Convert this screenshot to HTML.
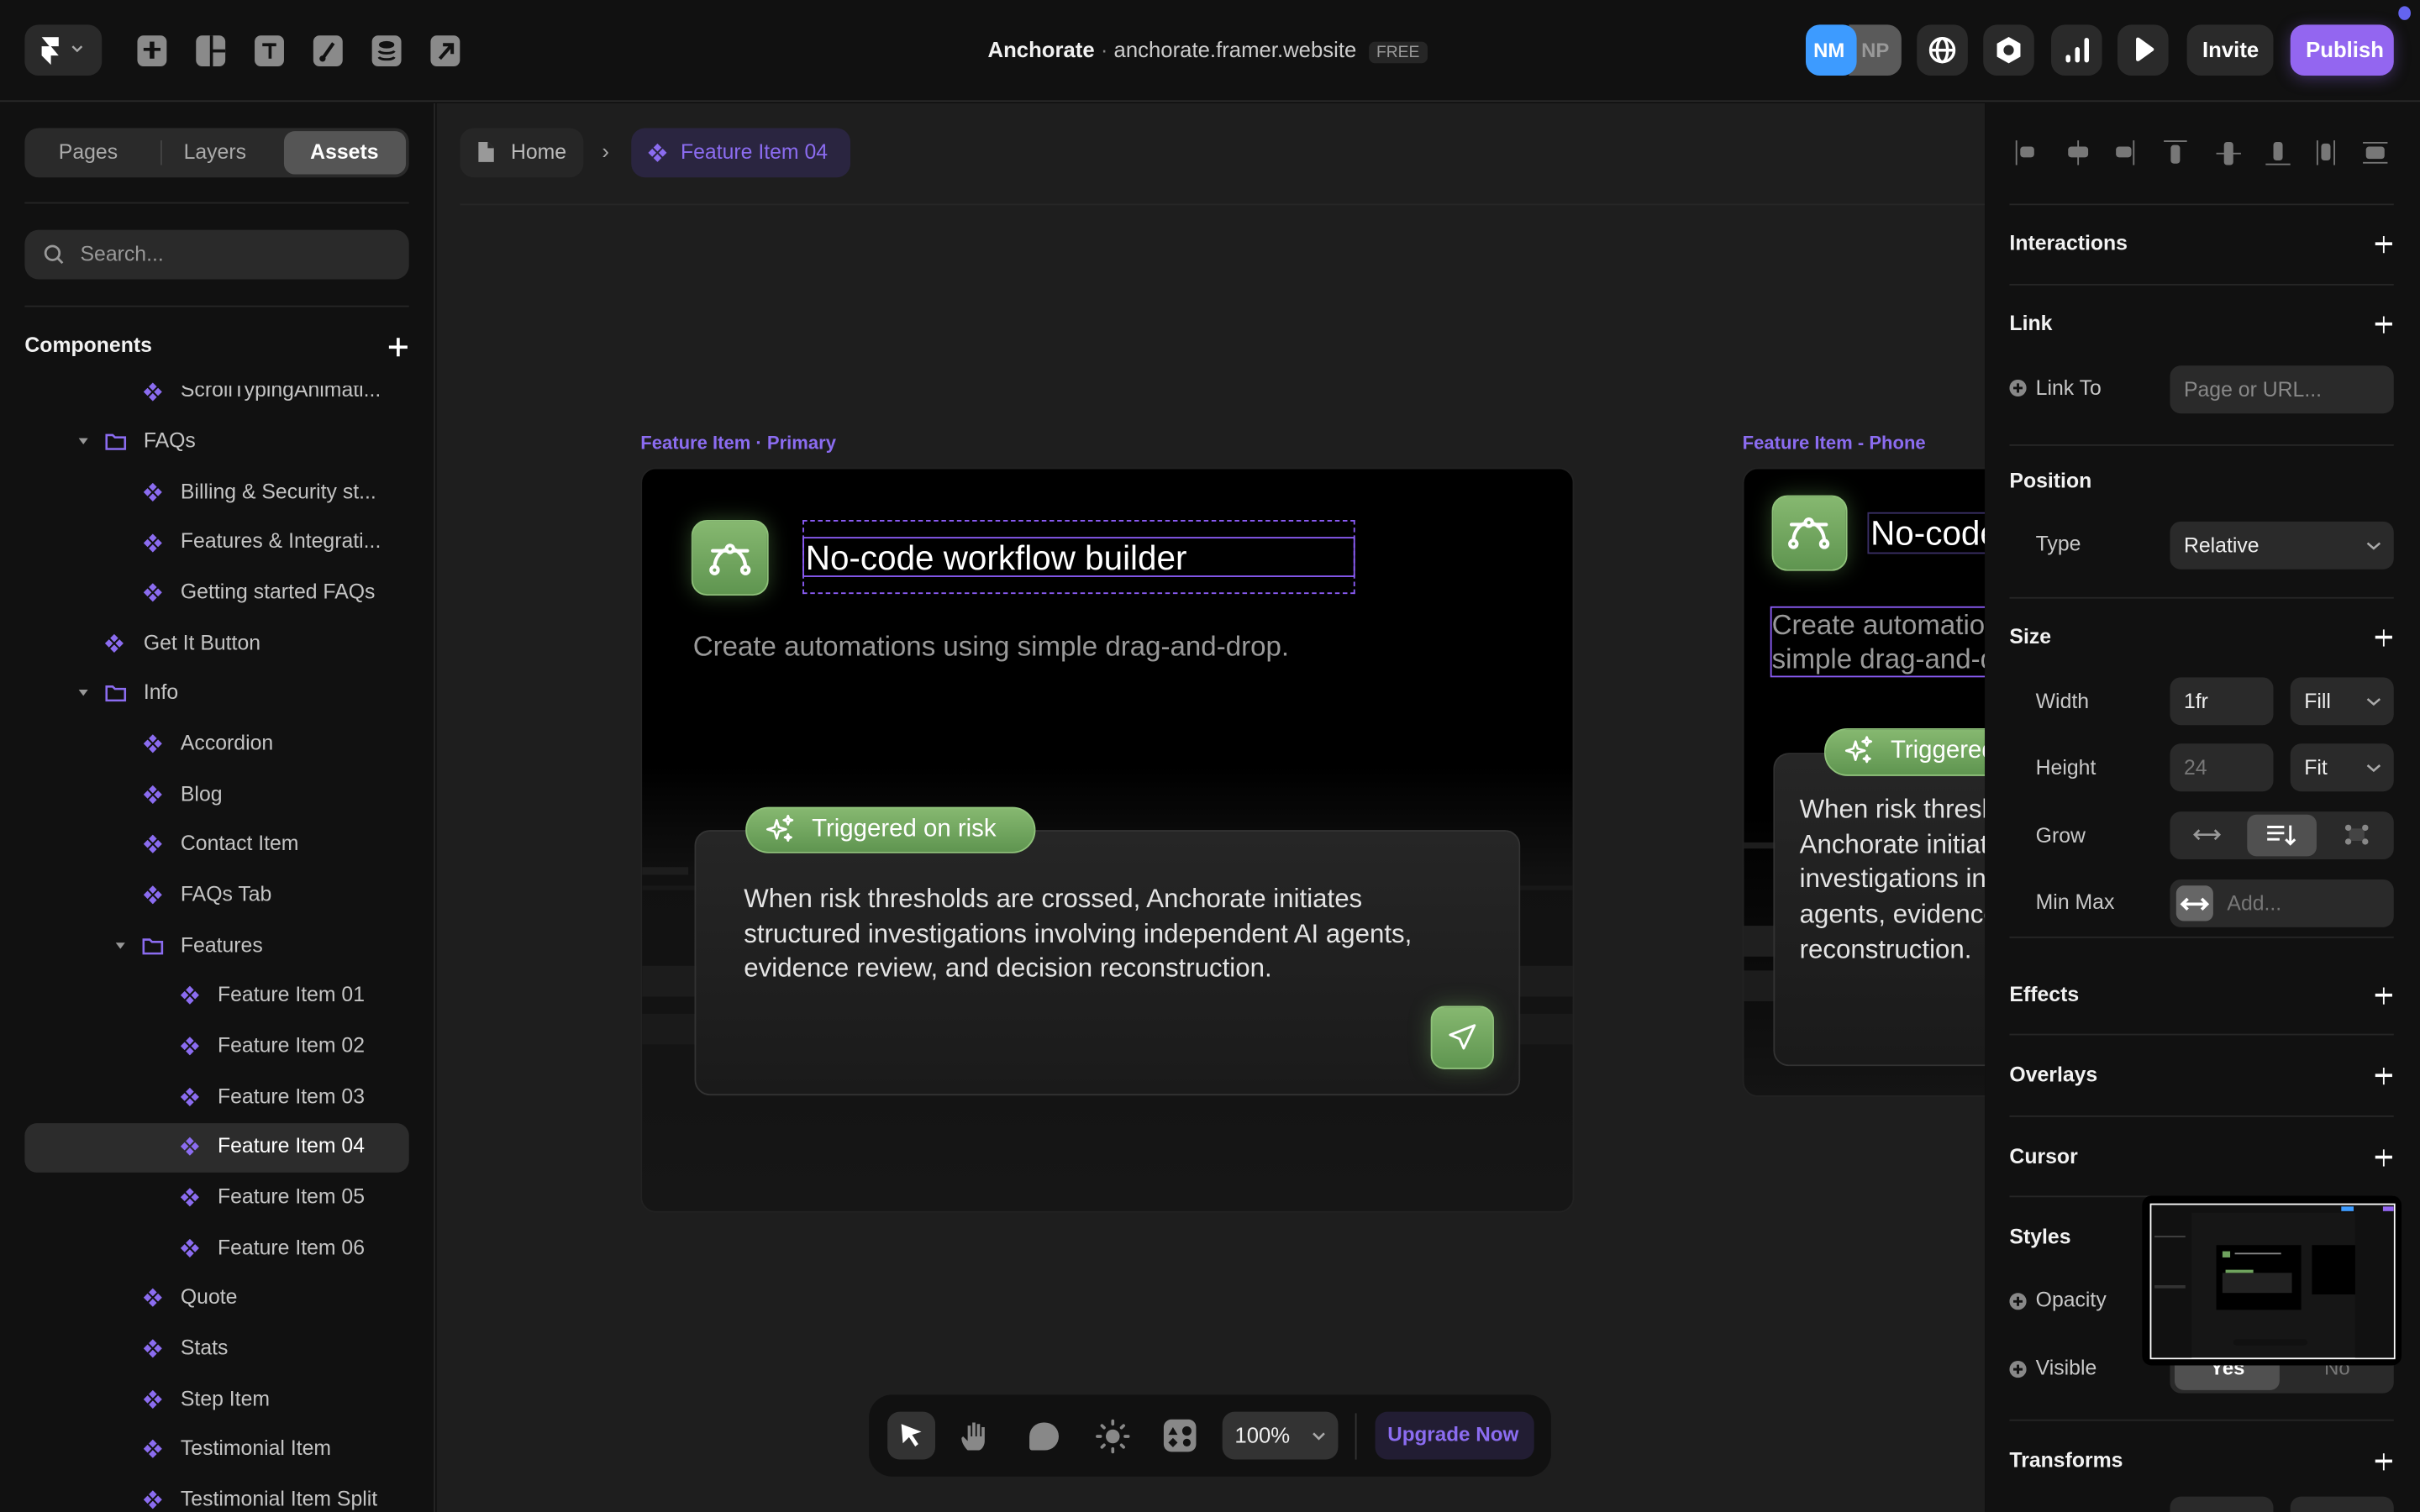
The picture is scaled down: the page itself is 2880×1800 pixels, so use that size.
<!DOCTYPE html>
<html><head><meta charset="utf-8">
<style>
*{margin:0;padding:0;box-sizing:border-box}
html,body{width:2880px;height:1800px;overflow:hidden;background:#111}
#w{position:absolute;left:0;top:0;width:1568px;height:980px;transform:scale(1.836735);transform-origin:0 0;font-family:"Liberation Sans",sans-serif;color:#ddd;background:#111;overflow:hidden}
.a{position:absolute}
.t{position:absolute;font-size:13px;line-height:18px;white-space:nowrap}
.tb{position:absolute;background:#2a2a2a;border-radius:8px}
.ic{position:absolute;width:20px;height:20px;background:#8a8a8a;border-radius:4px}
.li{position:absolute;font-size:13.5px;line-height:18px;color:#c4c4c4;white-space:nowrap}
.ci{position:absolute;width:12px;height:12px}
.hd{position:absolute;font-size:13.5px;font-weight:bold;color:#f2f2f2;line-height:18px}
.pl{position:absolute;font-size:18px;color:#fff;line-height:18px;font-weight:300;white-space:nowrap}
.dv{position:absolute;height:1px;background:#262626}
.lb{position:absolute;font-size:13.5px;color:#c8c8c8;line-height:18px}
.in{position:absolute;background:#2a2a2a;border-radius:7px;height:31px;font-size:13.5px;line-height:31px;padding-left:9px;color:#eee}
.gr{background:linear-gradient(#86b870,#5f9550);border:1px solid #8fc27a;box-shadow:0 0 14px rgba(120,190,100,.35)}
</style></head><body><div id="w">
<svg width="0" height="0" style="position:absolute"><defs>
<symbol id="cmp" viewBox="0 0 12 12"><path fill="#8b6cf0" d="M6 0l2.6 2.6L6 5.2 3.4 2.6zM6 6.8l2.6 2.6L6 12 3.4 9.4zM0 6l2.6-2.6L5.2 6 2.6 8.6zM6.8 6l2.6-2.6L12 6 9.4 8.6z"/></symbol>
<symbol id="fld" viewBox="0 0 14 12"><path fill="none" stroke="#8b6cf0" stroke-width="1.4" d="M1 2h4l1.5 1.5H13V11H1z"/></symbol>
<symbol id="bez" viewBox="0 0 24 24"><g fill="none" stroke="#fff" stroke-width="1.8" stroke-linecap="round"><path d="M4 17c0-6 4-10 8-10s8 4 8 10"/><path d="M3 8h18"/><circle cx="12" cy="7" r="1.8" fill="#6fa35e"/><circle cx="4" cy="18" r="1.8" fill="#6fa35e"/><circle cx="20" cy="18" r="1.8" fill="#6fa35e"/></g></symbol>
<symbol id="spk" viewBox="0 0 24 24"><g fill="none" stroke="#fff" stroke-width="1.6" stroke-linejoin="round"><path d="M9 5l1.5 5 5 1.5-5 1.5L9 18l-1.5-5-5-1.5 5-1.5z"/><path d="M17 2l.8 2.2L20 5l-2.2.8L17 8l-.8-2.2L14 5l2.2-.8z"/><path d="M17 15l.6 1.6 1.6.6-1.6.6L17 19.4l-.6-1.6-1.6-.6 1.6-.6z"/></g></symbol>
</defs></svg>

<!-- top bar -->
<div class="a" style="left:0;top:0;width:1568px;height:66px;background:#111;border-bottom:1px solid #2a2a2a"></div>
<div class="tb" style="left:16px;top:16px;width:50px;height:33px;border-radius:9px"></div>
<svg class="a" style="left:26px;top:24px" width="14" height="18" viewBox="0 0 14 18"><path fill="#fff" d="M1 0h11v6H6zM1 6h6l5 6H7v6l-6-6z"/></svg>
<svg class="a" style="left:46px;top:29px" width="8" height="6" viewBox="0 0 8 6"><path d="M1 1l3 3 3-3" stroke="#aaa" stroke-width="1.3" fill="none"/></svg>
<div class="ic" style="left:89px;top:23px;width:19px"></div><div class="a" style="left:93px;top:31px;width:11px;height:2.4px;background:#111"></div><div class="a" style="left:97.3px;top:27px;width:2.4px;height:11px;background:#111"></div>
<div class="ic" style="left:127px;top:23px;width:19px"></div><div class="a" style="left:135.5px;top:23px;width:2px;height:20px;background:#111"></div><div class="a" style="left:137px;top:32px;width:9px;height:2px;background:#111"></div>
<div class="ic" style="left:165px;top:23px;width:19px"></div><div class="a" style="left:170px;top:28px;width:9px;height:2.2px;background:#111"></div><div class="a" style="left:173.5px;top:28px;width:2.2px;height:10px;background:#111"></div>
<div class="ic" style="left:203px;top:23px;width:19px"></div><svg class="a" style="left:203px;top:23px" width="19" height="20"><path d="M6 15L13 5" stroke="#111" stroke-width="2.2"/><circle cx="6" cy="15" r="2" fill="#111"/></svg>
<div class="ic" style="left:241px;top:23px;width:19px"></div><svg class="a" style="left:241px;top:23px" width="19" height="20"><ellipse cx="9.5" cy="6" rx="5" ry="2.4" fill="#111"/><path d="M4.5 10c1 2 9 2 10 0M4.5 14c1 2 9 2 10 0" stroke="#111" stroke-width="1.6" fill="none"/></svg>
<div class="ic" style="left:279px;top:23px;width:19px"></div><svg class="a" style="left:279px;top:23px" width="19" height="20"><path d="M6 15L13 7M8 6h6v6" stroke="#111" stroke-width="2.2" fill="none"/></svg>

<div class="t" style="left:640px;top:23px;font-size:14px;color:#f2f2f2"><b>Anchorate</b> <span style="color:#888">·</span> <span style="color:#ccc">anchorate.framer.website</span> <span style="font-size:10.5px;color:#999;background:#262626;padding:1px 5px;border-radius:4px;margin-left:4px">FREE</span></div>

<div class="a" style="left:1198px;top:16px;width:34px;height:33px;background:#5a5a5a;border-radius:0 9px 9px 0"></div>
<div class="t" style="left:1206px;top:24px;font-size:13px;color:#999;font-weight:bold">NP</div>
<div class="a" style="left:1170px;top:16px;width:33px;height:33px;background:#3d9bff;border-radius:9px"></div>
<div class="t" style="left:1175px;top:24px;font-size:13px;color:#fff;font-weight:bold">NM</div>
<div class="tb" style="left:1242px;top:16px;width:33px;height:33px;border-radius:9px"></div>
<svg class="a" style="left:1249px;top:23px" width="19" height="19" viewBox="0 0 20 20"><g fill="none" stroke="#fff" stroke-width="2"><circle cx="10" cy="10" r="8"/><ellipse cx="10" cy="10" rx="3.5" ry="8"/><path d="M2 10h16"/></g></svg>
<div class="tb" style="left:1285px;top:16px;width:33px;height:33px;border-radius:9px"></div>
<svg class="a" style="left:1292px;top:23px" width="19" height="19" viewBox="0 0 20 20"><path fill="#fff" fill-rule="evenodd" d="M10 1l8 4.5v9L10 19l-8-4.5v-9zM10 6.5a3.5 3.5 0 100 7 3.5 3.5 0 000-7z"/></svg>
<div class="tb" style="left:1329px;top:16px;width:33px;height:33px;border-radius:9px"></div>
<svg class="a" style="left:1336px;top:23px" width="19" height="19"><g stroke="#fff" stroke-width="3" stroke-linecap="round"><path d="M4 16v-2M10 16V9M16 16V3"/></g></svg>
<div class="tb" style="left:1372px;top:16px;width:33px;height:33px;border-radius:9px"></div>
<svg class="a" style="left:1382px;top:24px" width="14" height="17"><path fill="#fff" d="M2 1.5c0-1 1-1.5 2-1l9 6.5c.8.6.8 1.5 0 2l-9 6.5c-1 .5-2 0-2-1z"/></svg>
<div class="tb" style="left:1417px;top:16px;width:56px;height:33px;border-radius:9px"></div>
<div class="t" style="left:1427px;top:23px;font-size:14px;color:#fff;font-weight:bold">Invite</div>
<div class="a" style="left:1484px;top:16px;width:67px;height:33px;background:#9366f0;border-radius:9px;box-shadow:0 2px 10px rgba(147,102,240,.35)"></div>
<div class="t" style="left:1494px;top:23px;font-size:14px;color:#fff;font-weight:bold">Publish</div>
<div class="a" style="left:1554px;top:4px;width:8px;height:9px;background:#6464f0;border-radius:50%"></div>

<!-- left panel -->
<div class="a" style="left:0;top:67px;width:282px;height:913px;background:#111;border-right:1px solid #262626"></div>
<div class="tb" style="left:16px;top:83px;width:249px;height:32px;border-radius:9px"></div>
<div class="a" style="left:184px;top:85px;width:79px;height:28px;background:#555;border-radius:7px"></div>
<div class="a" style="left:104px;top:91px;width:1px;height:16px;background:#444"></div>
<div class="t" style="left:38px;top:90px;font-size:13.5px;color:#aaa">Pages</div>
<div class="t" style="left:119px;top:90px;font-size:13.5px;color:#aaa">Layers</div>
<div class="t" style="left:201px;top:90px;font-size:13.5px;color:#fff;font-weight:bold">Assets</div>
<div class="dv" style="left:16px;top:131px;width:249px"></div>
<div class="tb" style="left:16px;top:149px;width:249px;height:32px;border-radius:9px"></div>
<svg class="a" style="left:28px;top:158px" width="14" height="14"><circle cx="6" cy="6" r="4.5" stroke="#999" stroke-width="1.5" fill="none"/><path d="M9.5 9.5l3 3" stroke="#999" stroke-width="1.5"/></svg>
<div class="t" style="left:52px;top:156px;font-size:13.5px;color:#999">Search...</div>
<div class="dv" style="left:16px;top:198px;width:249px"></div>
<div class="hd" style="left:16px;top:215px">Components</div>
<div class="a" style="left:252px;top:224px;width:12px;height:1.6px;background:#fff"></div><div class="a" style="left:257.2px;top:218.5px;width:1.6px;height:12px;background:#fff"></div>

<div class="a" style="left:16px;top:728px;width:249px;height:32px;background:#2c2c2c;border-radius:8px"></div>

<svg class="ci" style="left:93px;top:248px"><use href="#cmp"/></svg><div class="li" style="left:117px;top:244px;clip-path:inset(6px 0 0 0)">ScrollTypingAnimati...</div>
<div class="a" style="left:51px;top:284px;border:3px solid transparent;border-top:4px solid #999"></div>
<svg class="a" style="left:68px;top:280px" width="14" height="12"><use href="#fld"/></svg><div class="li" style="left:93px;top:277px">FAQs</div>
<svg class="ci" style="left:93px;top:313px"><use href="#cmp"/></svg><div class="li" style="left:117px;top:310px">Billing &amp; Security st...</div>
<svg class="ci" style="left:93px;top:346px"><use href="#cmp"/></svg><div class="li" style="left:117px;top:342px">Features &amp; Integrati...</div>
<svg class="ci" style="left:93px;top:378px"><use href="#cmp"/></svg><div class="li" style="left:117px;top:375px">Getting started FAQs</div>
<svg class="ci" style="left:68px;top:411px"><use href="#cmp"/></svg><div class="li" style="left:93px;top:408px">Get It Button</div>
<div class="a" style="left:51px;top:447px;border:3px solid transparent;border-top:4px solid #999"></div>
<svg class="a" style="left:68px;top:443px" width="14" height="12"><use href="#fld"/></svg><div class="li" style="left:93px;top:440px">Info</div>
<svg class="ci" style="left:93px;top:476px"><use href="#cmp"/></svg><div class="li" style="left:117px;top:473px">Accordion</div>
<svg class="ci" style="left:93px;top:509px"><use href="#cmp"/></svg><div class="li" style="left:117px;top:506px">Blog</div>
<svg class="ci" style="left:93px;top:541px"><use href="#cmp"/></svg><div class="li" style="left:117px;top:538px">Contact Item</div>
<svg class="ci" style="left:93px;top:574px"><use href="#cmp"/></svg><div class="li" style="left:117px;top:571px">FAQs Tab</div>
<div class="a" style="left:75px;top:611px;border:3px solid transparent;border-top:4px solid #999"></div>
<svg class="a" style="left:92px;top:607px" width="14" height="12"><use href="#fld"/></svg><div class="li" style="left:117px;top:604px">Features</div>
<svg class="ci" style="left:117px;top:639px"><use href="#cmp"/></svg><div class="li" style="left:141px;top:636px">Feature Item 01</div>
<svg class="ci" style="left:117px;top:672px"><use href="#cmp"/></svg><div class="li" style="left:141px;top:669px">Feature Item 02</div>
<svg class="ci" style="left:117px;top:705px"><use href="#cmp"/></svg><div class="li" style="left:141px;top:702px">Feature Item 03</div>
<svg class="ci" style="left:117px;top:737px"><use href="#cmp"/></svg><div class="li" style="left:141px;top:734px;color:#fff">Feature Item 04</div>
<svg class="ci" style="left:117px;top:770px"><use href="#cmp"/></svg><div class="li" style="left:141px;top:767px">Feature Item 05</div>
<svg class="ci" style="left:117px;top:803px"><use href="#cmp"/></svg><div class="li" style="left:141px;top:800px">Feature Item 06</div>
<svg class="ci" style="left:93px;top:835px"><use href="#cmp"/></svg><div class="li" style="left:117px;top:832px">Quote</div>
<svg class="ci" style="left:93px;top:868px"><use href="#cmp"/></svg><div class="li" style="left:117px;top:865px">Stats</div>
<svg class="ci" style="left:93px;top:901px"><use href="#cmp"/></svg><div class="li" style="left:117px;top:898px">Step Item</div>
<svg class="ci" style="left:93px;top:933px"><use href="#cmp"/></svg><div class="li" style="left:117px;top:930px">Testimonial Item</div>
<svg class="ci" style="left:93px;top:966px"><use href="#cmp"/></svg><div class="li" style="left:117px;top:963px">Testimonial Item Split</div>

<!-- canvas -->
<div class="a" style="left:283px;top:67px;width:1003px;height:913px;background:#1e1e1e"></div>
<div class="a" style="left:298px;top:83px;width:80px;height:32px;background:#262626;border-radius:9px"></div>
<svg class="a" style="left:309px;top:91px" width="12" height="15"><path fill="#999" d="M1 1h6l4 4v9H1z"/><path fill="#262626" d="M7 1v4h4z"/></svg>
<div class="t" style="left:331px;top:90px;font-size:13.5px;color:#bbb">Home</div>
<div class="t" style="left:390px;top:89px;font-size:14px;color:#aaa">›</div>
<div class="a" style="left:409px;top:83px;width:142px;height:32px;background:#2a2540;border-radius:9px"></div>
<svg class="ci" style="left:420px;top:93px"><use href="#cmp"/></svg>
<div class="t" style="left:441px;top:90px;font-size:13.5px;color:#8b6cf0">Feature Item 04</div>
<div class="dv" style="left:298px;top:132px;width:988px;background:#262626"></div>

<div class="t" style="left:415px;top:278px;font-size:12px;color:#8b6cf0;font-weight:bold">Feature Item · Primary</div>
<div class="a" style="left:415px;top:303px;width:605px;height:483px;border-radius:10px;border:1px solid #222;background:linear-gradient(#000 0%,#000 40%,#111 55%,#161616 100%);overflow:hidden">
  <div class="a" style="left:0;top:258px;width:30px;height:5px;background:#1d1d1d"></div>
  <div class="a" style="left:0;top:270px;width:605px;height:3px;background:#181818"></div>
  <div class="a" style="left:0;top:322px;width:605px;height:20px;background:#1c1c1c"></div>
  <div class="a" style="left:0;top:353px;width:605px;height:20px;background:#1a1a1a"></div>
</div>
<div class="a gr" style="left:448px;top:337px;width:50px;height:49px;border-radius:10px"></div>
<svg class="a" style="left:458px;top:347px" width="30" height="30"><use href="#bez"/></svg>
<div class="a" style="left:520px;top:337px;width:358px;height:48px;border:1px dashed #8b5cf6"></div>
<div class="a" style="left:520px;top:348px;width:358px;height:26px;border:1.3px solid #8b5cf6"></div>
<div class="pl" style="left:522px;top:350px;font-size:22px;line-height:24px">No-code workflow builder</div>
<div class="pl" style="left:449px;top:409px;font-size:18px;line-height:20px;color:#999">Create automations using simple drag-and-drop.</div>
<div class="a" style="left:450px;top:538px;width:535px;height:172px;border-radius:10px;border:1px solid #333;background:linear-gradient(#262626,#1a1a1a)"></div>
<div class="a gr" style="left:483px;top:523px;width:188px;height:30px;border-radius:15px;box-shadow:none"></div>
<svg class="a" style="left:495px;top:527px" width="22" height="22"><use href="#spk"/></svg>
<div class="pl" style="left:526px;top:529px;font-size:16px;font-weight:normal">Triggered on risk</div>
<div class="pl" style="left:482px;top:572px;font-size:17px;line-height:22.5px;color:#e4e4e4;white-space:pre">When risk thresholds are crossed, Anchorate initiates
structured investigations involving independent AI agents,
evidence review, and decision reconstruction.</div>
<div class="a gr" style="left:927px;top:652px;width:41px;height:41px;border-radius:9px"></div>
<svg class="a" style="left:937px;top:662px" width="21" height="21" viewBox="0 0 24 24"><path d="M21 3L3 10l7 3 3 7z" fill="none" stroke="#fff" stroke-width="1.8" stroke-linejoin="round"/></svg>

<!-- phone card -->
<div class="t" style="left:1129px;top:278px;font-size:12px;color:#8b6cf0;font-weight:bold">Feature Item - Phone</div>
<div class="a" style="left:1129px;top:303px;width:200px;height:408px;border-radius:10px;border:1px solid #222;background:linear-gradient(#000 0%,#000 55%,#141414 100%);overflow:hidden">
 <div class="a" style="left:0;top:242px;width:40px;height:4px;background:#1d1d1d"></div>
 <div class="a" style="left:0;top:296px;width:40px;height:20px;background:#1f1f1f"></div>
 <div class="a" style="left:0;top:325px;width:40px;height:20px;background:#1c1c1c"></div>
</div>
<div class="a gr" style="left:1148px;top:321px;width:49px;height:49px;border-radius:10px"></div>
<svg class="a" style="left:1157px;top:330px" width="30" height="30"><use href="#bez"/></svg>
<div class="a" style="left:1210px;top:332px;width:90px;height:27px;border:1.3px solid #3a2f66"></div>
<div class="pl" style="left:1212px;top:334px;font-size:22px;line-height:24px">No-code workflow builder</div>
<div class="a" style="left:1147px;top:393px;width:150px;height:46px;border:1.3px solid #8b5cf6"></div>
<div class="pl" style="left:1148px;top:394px;font-size:18px;line-height:22px;color:#999;white-space:pre">Create automations using
simple drag-and-drop.</div>
<div class="a" style="left:1149px;top:488px;width:200px;height:203px;border-radius:10px;border:1px solid #333;background:linear-gradient(#262626,#1a1a1a)"></div>
<div class="a gr" style="left:1182px;top:472px;width:150px;height:31px;border-radius:15px;box-shadow:none"></div>
<svg class="a" style="left:1194px;top:476px" width="22" height="22"><use href="#spk"/></svg>
<div class="pl" style="left:1225px;top:478px;font-size:16px;font-weight:normal">Triggered on risk</div>
<div class="pl" style="left:1166px;top:514px;font-size:17px;line-height:22.7px;color:#e4e4e4;white-space:pre">When risk thresholds are
Anchorate initiates
investigations involving
agents, evidence
reconstruction.</div>

<!-- bottom toolbar -->
<div class="a" style="left:563px;top:904px;width:442px;height:53px;background:#111;border-radius:15px"></div>
<div class="a" style="left:575px;top:915px;width:31px;height:31px;background:#333;border-radius:8px"></div>
<svg class="a" style="left:581px;top:921px" width="20" height="20"><path d="M3 2l13 5-6 2 4 6-2 1.5-4-6-4 4z" fill="#fff"/></svg>
<svg class="a" style="left:622px;top:920px" width="20" height="22"><path fill="#888" d="M5 20c-2-2-4-5-4-8l1-1 3 3V4h2v7h1V2h2v9h1V3h2v8h1V5h2v9c0 3-2 6-4 6z"/></svg>
<div class="a" style="left:667px;top:922px;width:19px;height:18px;background:#888;border-radius:10px 10px 10px 2px"></div>
<svg class="a" style="left:709px;top:919px" width="24" height="24"><circle cx="12" cy="12" r="4.5" fill="#888"/><g stroke="#888" stroke-width="2" stroke-linecap="round"><path d="M12 2v2M12 20v2M2 12h2M20 12h2M5 5l1.4 1.4M17.6 17.6L19 19M5 19l1.4-1.4M17.6 6.4L19 5"/></g></svg>
<div class="a" style="left:754px;top:920px;width:21px;height:21px;background:#888;border-radius:5px"></div>
<svg class="a" style="left:754px;top:920px" width="21" height="21"><path d="M6 5l-3 5h6z" fill="#111"/><circle cx="15" cy="7.5" r="3" fill="#111"/><path d="M6 12l3 3-3 3-3-3z" fill="#111"/><circle cx="15" cy="15" r="2.5" fill="#111"/></svg>
<div class="a" style="left:792px;top:915px;width:75px;height:31px;background:#333;border-radius:8px"></div>
<div class="t" style="left:800px;top:921px;font-size:14px;color:#eee">100%</div>
<svg class="a" style="left:850px;top:928px" width="9" height="6"><path d="M1 1l3.5 3.5L8 1" stroke="#aaa" stroke-width="1.4" fill="none"/></svg>
<div class="a" style="left:878px;top:916px;width:1px;height:30px;background:#333"></div>
<div class="a" style="left:891px;top:915px;width:103px;height:31px;background:#221d33;border-radius:8px"></div>
<div class="t" style="left:899px;top:921px;font-size:13.2px;color:#8b6cf0;font-weight:bold">Upgrade Now</div>

<!-- right panel -->
<div class="a" style="left:1286px;top:67px;width:282px;height:913px;background:#111"></div>
<svg class="a" style="left:1302px;top:88px" width="250" height="22"><g fill="#777">
<rect x="4" y="3" width="1" height="16"/><rect x="7" y="7" width="9" height="7" rx="2"/>
<rect x="44" y="3" width="1" height="16"/><rect x="38" y="7" width="13" height="7" rx="2"/>
<rect x="69" y="7" width="10" height="7" rx="2"/><rect x="80" y="3" width="1" height="16"/>
<rect x="100" y="3" width="15" height="1"/><rect x="104.5" y="6" width="6" height="12" rx="2"/>
<rect x="134" y="11" width="16" height="1"/><rect x="139" y="4" width="6" height="15" rx="2"/>
<rect x="166" y="18" width="16" height="1"/><rect x="171" y="4" width="6" height="12" rx="2"/>
<rect x="199" y="3" width="1" height="16"/><rect x="210" y="3" width="1" height="16"/><rect x="202" y="5" width="6" height="11" rx="2"/>
<rect x="229" y="4" width="16" height="1"/><rect x="229" y="17" width="16" height="1"/><rect x="231" y="7" width="12" height="8" rx="2"/>
</g></svg>
<div class="dv" style="left:1302px;top:132px;width:249px"></div>
<div class="hd" style="left:1302px;top:149px">Interactions</div>
<div class="dv" style="left:1302px;top:184px;width:249px"></div>
<div class="hd" style="left:1302px;top:201px">Link</div>
<svg class="a" style="left:1302px;top:246px" width="11" height="11"><circle cx="5.5" cy="5.5" r="5.5" fill="#888"/><path d="M5.5 2.5v6M2.5 5.5h6" stroke="#111" stroke-width="1.6"/></svg>
<div class="lb" style="left:1319px;top:243px">Link To</div>
<div class="in" style="left:1406px;top:237px;width:145px;color:#888">Page or URL...</div>
<div class="dv" style="left:1302px;top:288px;width:249px"></div>
<div class="hd" style="left:1302px;top:303px">Position</div>
<div class="lb" style="left:1319px;top:344px">Type</div>
<div class="in" style="left:1406px;top:338px;width:145px">Relative</div>
<div class="dv" style="left:1302px;top:387px;width:249px"></div>
<div class="hd" style="left:1302px;top:404px">Size</div>
<div class="lb" style="left:1319px;top:446px">Width</div>
<div class="in" style="left:1406px;top:439px;width:67px">1fr</div>
<div class="in" style="left:1484px;top:439px;width:67px">Fill</div>
<div class="lb" style="left:1319px;top:489px">Height</div>
<div class="in" style="left:1406px;top:482px;width:67px;color:#777">24</div>
<div class="in" style="left:1484px;top:482px;width:67px">Fit</div>
<div class="lb" style="left:1319px;top:533px">Grow</div>
<div class="in" style="left:1406px;top:526px;width:145px"></div>
<div class="a" style="left:1456px;top:528px;width:45px;height:27px;background:#505050;border-radius:6px"></div>
<svg class="a" style="left:1420px;top:534px" width="20" height="14"><path d="M2 7h16M5 4L2 7l3 3M15 4l3 3-3 3" stroke="#999" stroke-width="1.4" fill="none"/></svg>
<svg class="a" style="left:1468px;top:533px" width="22" height="16"><path d="M1 3h11M1 7h11M1 11h8M16 2v12M13 11l3 3 3-3" stroke="#fff" stroke-width="1.6" fill="none"/></svg>
<svg class="a" style="left:1519px;top:534px" width="16" height="14"><rect x="3" y="3" width="10" height="8" fill="#444"/><g fill="#888"><circle cx="2.5" cy="2.5" r="2"/><circle cx="13.5" cy="2.5" r="2"/><circle cx="2.5" cy="11.5" r="2"/><circle cx="13.5" cy="11.5" r="2"/></g></svg>
<div class="lb" style="left:1319px;top:576px">Min Max</div>
<div class="in" style="left:1406px;top:570px;width:145px;color:#777;padding-left:37px">Add...</div>
<div class="a" style="left:1410px;top:574px;width:24px;height:23px;background:#666;border-radius:5px"></div>
<svg class="a" style="left:1412px;top:579px" width="20" height="14"><path d="M2 7h16M5.5 3.5L2 7l3.5 3.5M14.5 3.5L18 7l-3.5 3.5" stroke="#fff" stroke-width="2" fill="none"/></svg>
<div class="dv" style="left:1302px;top:607px;width:249px"></div>
<div class="hd" style="left:1302px;top:636px">Effects</div>
<div class="dv" style="left:1302px;top:670px;width:249px"></div>
<div class="hd" style="left:1302px;top:688px">Overlays</div>
<div class="dv" style="left:1302px;top:723px;width:249px"></div>
<div class="hd" style="left:1302px;top:741px">Cursor</div>
<div class="dv" style="left:1302px;top:775px;width:249px"></div>
<div class="hd" style="left:1302px;top:793px">Styles</div>
<svg class="a" style="left:1302px;top:838px" width="11" height="11"><circle cx="5.5" cy="5.5" r="5.5" fill="#888"/><path d="M5.5 2.5v6M2.5 5.5h6" stroke="#111" stroke-width="1.6"/></svg>
<div class="lb" style="left:1319px;top:834px">Opacity</div>
<svg class="a" style="left:1302px;top:882px" width="11" height="11"><circle cx="5.5" cy="5.5" r="5.5" fill="#888"/><path d="M5.5 2.5v6M2.5 5.5h6" stroke="#111" stroke-width="1.6"/></svg>
<div class="lb" style="left:1319px;top:878px">Visible</div>
<div class="in" style="left:1406px;top:872px;width:145px"></div>
<div class="a" style="left:1409px;top:874px;width:68px;height:27px;background:#505050;border-radius:6px"></div>
<div class="t" style="left:1432px;top:878px;color:#fff;font-weight:bold">Yes</div>
<div class="t" style="left:1506px;top:878px;color:#777">No</div>
<div class="dv" style="left:1302px;top:920px;width:249px"></div>
<div class="hd" style="left:1302px;top:938px">Transforms</div>
<div class="in" style="left:1406px;top:970px;width:67px"></div>
<div class="in" style="left:1484px;top:970px;width:67px"></div>
<!-- plus icons -->
<div class="a" style="left:1539px;top:157.2px;width:11px;height:1.6px;background:#fff"></div><div class="a" style="left:1543.7px;top:152.5px;width:1.6px;height:11px;background:#fff"></div>
<div class="a" style="left:1539px;top:209.2px;width:11px;height:1.6px;background:#fff"></div><div class="a" style="left:1543.7px;top:204.5px;width:1.6px;height:11px;background:#fff"></div>
<div class="a" style="left:1539px;top:412.2px;width:11px;height:1.6px;background:#fff"></div><div class="a" style="left:1543.7px;top:407.5px;width:1.6px;height:11px;background:#fff"></div>
<div class="a" style="left:1539px;top:644.2px;width:11px;height:1.6px;background:#fff"></div><div class="a" style="left:1543.7px;top:639.5px;width:1.6px;height:11px;background:#fff"></div>
<div class="a" style="left:1539px;top:696.2px;width:11px;height:1.6px;background:#fff"></div><div class="a" style="left:1543.7px;top:691.5px;width:1.6px;height:11px;background:#fff"></div>
<div class="a" style="left:1539px;top:749.2px;width:11px;height:1.6px;background:#fff"></div><div class="a" style="left:1543.7px;top:744.5px;width:1.6px;height:11px;background:#fff"></div>
<div class="a" style="left:1539px;top:946.2px;width:11px;height:1.6px;background:#fff"></div><div class="a" style="left:1543.7px;top:941.5px;width:1.6px;height:11px;background:#fff"></div>
<!-- chevrons -->
<svg class="a" style="left:1533px;top:351px" width="10" height="6"><path d="M1 1l4 3.5L9 1" stroke="#aaa" stroke-width="1.4" fill="none"/></svg>
<svg class="a" style="left:1533px;top:452px" width="10" height="6"><path d="M1 1l4 3.5L9 1" stroke="#aaa" stroke-width="1.4" fill="none"/></svg>
<svg class="a" style="left:1533px;top:495px" width="10" height="6"><path d="M1 1l4 3.5L9 1" stroke="#aaa" stroke-width="1.4" fill="none"/></svg>

<!-- preview thumbnail -->
<div class="a" style="left:1388px;top:775px;width:168px;height:110px;background:#000;border-radius:6px"></div>
<div class="a" style="left:1393px;top:780px;width:159px;height:101px;border:1px solid #fff;background:#161616;overflow:hidden">
 <div class="a" style="left:0;top:0;width:159px;height:5px;background:#111"></div>
 <div class="a" style="left:0;top:5px;width:26px;height:96px;background:#111"></div>
 <div class="a" style="left:2px;top:20px;width:20px;height:1px;background:#444"></div>
 <div class="a" style="left:2px;top:52px;width:20px;height:2px;background:#333"></div>
 <div class="a" style="left:132px;top:5px;width:27px;height:96px;background:#111"></div>
 <div class="a" style="left:42px;top:26px;width:55px;height:42px;background:#000"></div>
 <div class="a" style="left:46px;top:30px;width:5px;height:4px;background:#6fa35e"></div>
 <div class="a" style="left:54px;top:31px;width:30px;height:1px;background:#888"></div>
 <div class="a" style="left:46px;top:44px;width:45px;height:13px;background:#222"></div>
 <div class="a" style="left:48px;top:42px;width:18px;height:2px;background:#6fa35e"></div>
 <div class="a" style="left:104px;top:26px;width:28px;height:32px;background:#000"></div>
 <div class="a" style="left:53px;top:87px;width:48px;height:4px;background:#111;border-radius:2px"></div>
 <div class="a" style="left:123px;top:1px;width:8px;height:3px;background:#3d9bff"></div>
 <div class="a" style="left:150px;top:1px;width:7px;height:3px;background:#9366f0"></div>
</div>
</div></body></html>
